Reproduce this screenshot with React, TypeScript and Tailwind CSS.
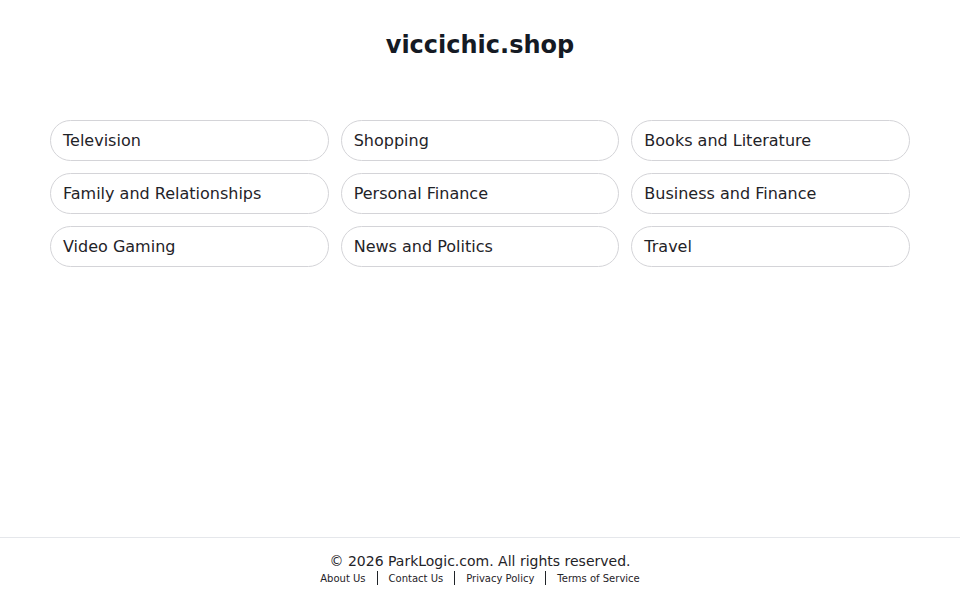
const TOPICS = [
  "Television",
  "Shopping",
  "Books and Literature",
  "Family and Relationships",
  "Personal Finance",
  "Business and Finance",
  "Video Gaming",
  "News and Politics",
  "Travel",
]

const LINKS = ["About Us", "Contact Us", "Privacy Policy", "Terms of Service"]

export default function App() {
  return (
    <div className="min-h-screen flex flex-col bg-white text-[#1f2328] font-['DejaVu_Sans',sans-serif]">
      <main className="flex-1 px-[50px]">
        <h1 className="pt-[29px] text-center text-2xl leading-8 font-bold text-[#151a24]">viccichic.shop</h1>

        <div className="mt-[59px] grid grid-cols-3 gap-3">
          {TOPICS.map((t) => (
            <a
              key={t}
              href="#"
              className="flex items-center h-[41px] px-3 rounded-full border border-[#d4d4d8] text-base text-[#1f2328]"
            >
              {t}
            </a>
          ))}
        </div>
      </main>

      {/* footer */}
      <footer className="border-t border-[#e5e7eb] pt-[13px] pb-[15px] text-center">
        <p className="text-sm leading-5 text-[#1f2328]">© 2026 ParkLogic.com. All rights reserved.</p>
        <div className="flex items-center justify-center h-[14px] text-[10px] text-[#1f2328]">
          {LINKS.map((l, i) => (
            <div key={l} className="flex items-center">
              {i > 0 && <span className="w-px h-[14px] bg-[#1f2328] mx-[11px]" />}
              <a href="#">{l}</a>
            </div>
          ))}
        </div>
      </footer>
    </div>
  )
}
